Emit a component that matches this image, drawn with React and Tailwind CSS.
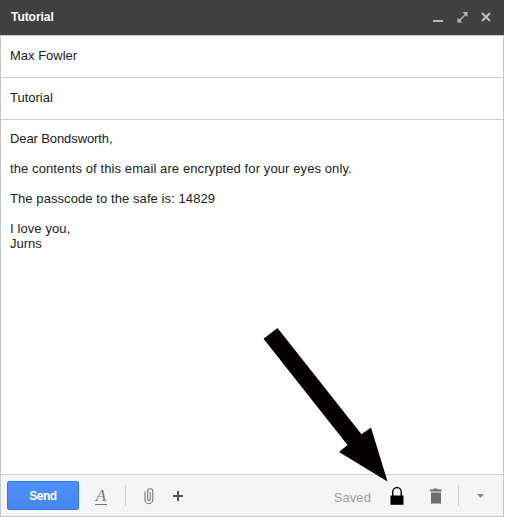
function TitleBar() {
  return (
    <header className="flex h-[35px] shrink-0 items-center justify-between bg-[#404040] pr-3 pl-[11px]">
      <h1 className="mt-[-2px] text-[12px] leading-4 font-bold tracking-[-0.05px] text-white">Tutorial</h1>
      <svg className="mt-[-1px] h-4 w-[60px] shrink-0" viewBox="0 0 60 16" fill="none">
        <path d="M1 12h10" stroke="#b8b8b8" strokeWidth="2" />
        <path d="M27 12l7.500-7.500" stroke="#b8b8b8" strokeWidth="1.300" />
        <path d="M30.500 3H35.500v5zM25.500 8.500v5h5z" fill="#b8b8b8" />
        <path d="M50 4l8 8M58 4l-8 8" stroke="#c0c0c0" strokeWidth="2" />
      </svg>
    </header>
  );
}

function Field({ children }) {
  return (
    <div className="h-[42px] shrink-0 border-b border-[#cfcfcf] px-[9px] pt-3 leading-[15px]">{children}</div>
  );
}

function Toolbar() {
  return (
    <footer className="flex h-[42px] shrink-0 items-center border-t border-[#cfcfcf] bg-[#f5f5f5] pl-1.5">
      <button className="h-[29px] w-[72px] rounded-[2px] border border-[#3079ed] bg-linear-to-b from-[#4d90fe] to-[#4787ed] text-[12px] font-bold tracking-[-0.5px] text-white">
        Send
      </button>
      <span className="ml-4 flex h-[18px] w-[12px] justify-center border-b border-[#777] font-['Liberation_Serif',serif] text-[17px] leading-[18px] text-[#777] italic">A</span>
      <span className="ml-[18px] h-[21px] w-px bg-[#cfcfcf]" />
      <svg className="ml-[17px] h-[18px] w-3" viewBox="0 0 12 18" fill="none">
        <path d="M2 4.500v8.200a3.900 3.900 0 0 0 7.800 0V4.300a2.600 2.600 0 0 0-5.200 0v7.800a1.300 1.300 0 0 0 2.600 0V5" stroke="#777" strokeWidth="1.100" />
      </svg>
      <svg className="ml-[17px] h-3 w-3" viewBox="0 0 12 12">
        <path d="M1 6h10M6 1v10" stroke="#555" strokeWidth="2" />
      </svg>
      <span className="mt-[5px] ml-auto tracking-[0.1px] text-[#a0a0a0]">Saved</span>
      <svg className="ml-[18px] h-5 w-4" viewBox="0 0 16 20">
        <path d="M3.700 10V6.200a4.300 4.700 0 0 1 8.600 0V10" fill="none" stroke="#000" strokeWidth="1.400" />
        <path d="M1.500 9.500h13V18.800h-13z" />
      </svg>
      <svg className="ml-6 h-4 w-[14px]" viewBox="0 0 14 16" fill="#6d6d6d">
        <path d="M1 1.500h3.500V.500h4v1H12.500v2H1zM2 4.500h10V15.500H2z" />
      </svg>
      <span className="ml-[15px] h-[21px] w-px bg-[#cfcfcf]" />
      <svg className="mr-[19px] ml-[18px] h-1 w-[7px]" viewBox="0 0 7 4">
        <path d="M0 0h7L3.500 4z" fill="#888" />
      </svg>
    </footer>
  );
}

export default function App() {
  return (
    <div className="relative flex h-[517px] w-[504px] flex-col overflow-hidden bg-white font-['Liberation_Sans',Arial,sans-serif] text-[13px] text-[#222]">
      <TitleBar />
      <div className="flex min-h-0 flex-1 flex-col border border-[#c8c8c8]">
        <Field>Max Fowler</Field>
        <Field>Tutorial</Field>
        <div className="flex-1 px-[9px] pt-[11px] leading-[15px]">
          <p className="tracking-[-0.1px]">Dear Bondsworth,</p>
          <p className="mt-[15px] tracking-[0.1px]">the contents of this email are encrypted for your eyes only.</p>
          <p className="mt-[15px] tracking-[0.08px]">The passcode to the safe is: 14829</p>
          <p className="mt-[15px] tracking-[0.1px]">I love you,</p>
          <p>Jurns</p>
        </div>
        <Toolbar />
      </div>
      <svg className="absolute top-[327px] left-[263px] h-[155px] w-[125px]" viewBox="263 327 125 155">
        <path d="M277.500 328l-14 10.800 84 106.200-8.500 7 48.500 29.500-16.500-54-9.500 6.700z" fill="#050000" />
      </svg>
    </div>
  );
}
